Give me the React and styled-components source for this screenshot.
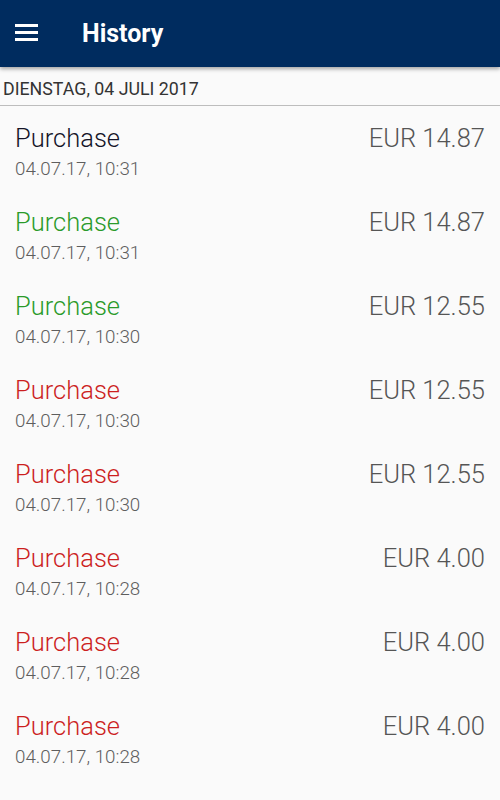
import styled, { createGlobalStyle } from "styled-components";

const Global = createGlobalStyle`
  html, body {
    margin: 0;
    padding: 0;
    background: #fafafa;
    font-family: Roboto, "Liberation Sans", sans-serif;
  }
`;

const items = [
  { color: "#141428", date: "04.07.17, 10:31", amount: "EUR 14.87" },
  { color: "#2a9a2a", date: "04.07.17, 10:31", amount: "EUR 14.87" },
  { color: "#2a9a2a", date: "04.07.17, 10:30", amount: "EUR 12.55" },
  { color: "#cc1f1f", date: "04.07.17, 10:30", amount: "EUR 12.55" },
  { color: "#cc1f1f", date: "04.07.17, 10:30", amount: "EUR 12.55" },
  { color: "#cc1f1f", date: "04.07.17, 10:28", amount: "EUR 4.00" },
  { color: "#cc1f1f", date: "04.07.17, 10:28", amount: "EUR 4.00" },
  { color: "#cc1f1f", date: "04.07.17, 10:28", amount: "EUR 4.00" },
];

const Page = styled.div`
  width: 500px;
  height: 800px;
  overflow: hidden;
  background: #fafafa;
`;

const Toolbar = styled.header`
  height: 67px;
  background: #002c5f;
  display: flex;
  align-items: center;
  padding: 0 15px;
  box-sizing: border-box;
  box-shadow: 0 2px 4px rgba(0, 0, 0, 0.35);
  position: relative;
`;

const Menu = styled.div`
  width: 23px;
  display: flex;
  flex-direction: column;
  gap: 4.5px;
  margin-top: -2px;
  span {
    display: block;
    height: 2.5px;
    background: #fff;
  }
`;

const Title = styled.h1`
  margin: 0 0 0 44px;
  color: #fff;
  font-size: 25px;
  font-weight: 700;
`;

const SectionHeader = styled.div`
  height: 39px;
  display: flex;
  align-items: center;
  padding: 4px 0 0 3px;
  box-sizing: border-box;
  font-size: 17.8px;
  color: #333;
  border-bottom: 1px solid #bdbdbd;
`;

const Row = styled.div`
  height: 84px;
  display: flex;
  justify-content: space-between;
  align-items: flex-start;
  padding: 17px 15px 0 15px;
  box-sizing: border-box;
`;

const Left = styled.div`
  display: flex;
  flex-direction: column;
`;

const Label = styled.div`
  font-size: 25.5px;
  font-weight: 300;
  line-height: 31px;
  color: ${(p) => p.$color};
`;

const Stamp = styled.div`
  margin-top: 2px;
  font-size: 18.8px;
  font-weight: 300;
  line-height: 26px;
  color: #5e5e5e;
`;

const Amount = styled.div`
  font-size: 25.5px;
  font-weight: 300;
  line-height: 31px;
  color: #555;
`;

export default function App() {
  return (
    <Page>
      <Global />
      <Toolbar>
        <Menu>
          <span />
          <span />
          <span />
        </Menu>
        <Title>History</Title>
      </Toolbar>
      <SectionHeader>DIENSTAG, 04 JULI 2017</SectionHeader>
      {items.map((it, i) => (
        <Row key={i}>
          <Left>
            <Label $color={it.color}>Purchase</Label>
            <Stamp>{it.date}</Stamp>
          </Left>
          <Amount>{it.amount}</Amount>
        </Row>
      ))}
    </Page>
  );
}
